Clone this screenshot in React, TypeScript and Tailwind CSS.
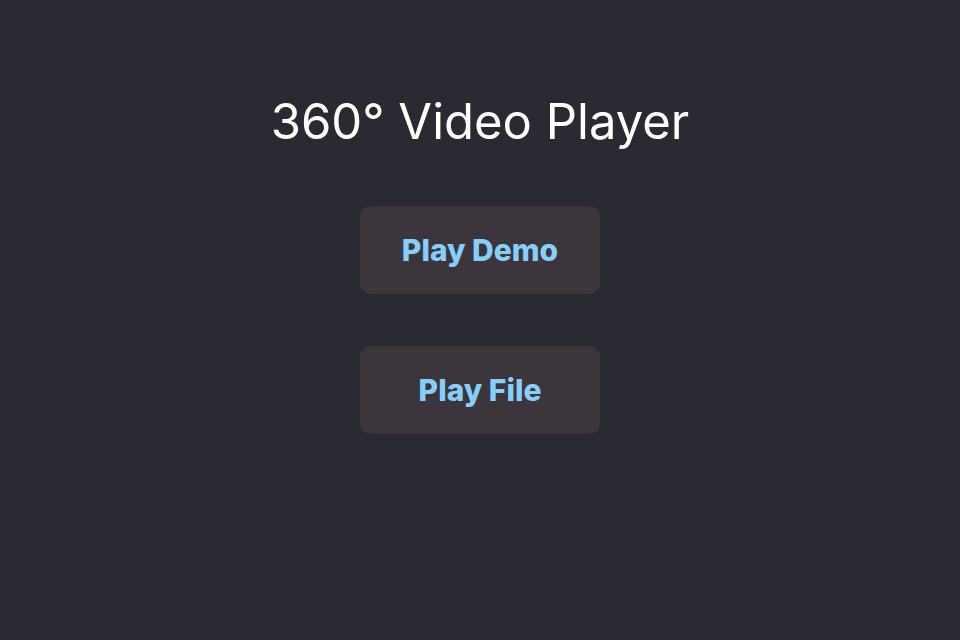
export default function App() {
  return (
    <div
      className="flex min-h-screen flex-col items-center bg-[#2a2a32] pt-[92px]"
      style={{ fontFamily: "Inter, 'Noto Sans', sans-serif" }}
    >
      <h1 className="text-[49px] leading-[60px] font-normal text-white">
        360° Video Player
      </h1>
      <div className="mt-[54px] flex flex-col gap-[52px]">
        <button
          type="button"
          className="h-[88px] w-[240px] rounded-[10px] bg-[#3c353c] text-[30px] font-extrabold text-[#86cffa]"
        >
          Play Demo
        </button>
        <button
          type="button"
          className="h-[88px] w-[240px] rounded-[10px] bg-[#3c353c] text-[30px] font-extrabold text-[#86cffa]"
        >
          Play File
        </button>
      </div>
    </div>
  );
}
